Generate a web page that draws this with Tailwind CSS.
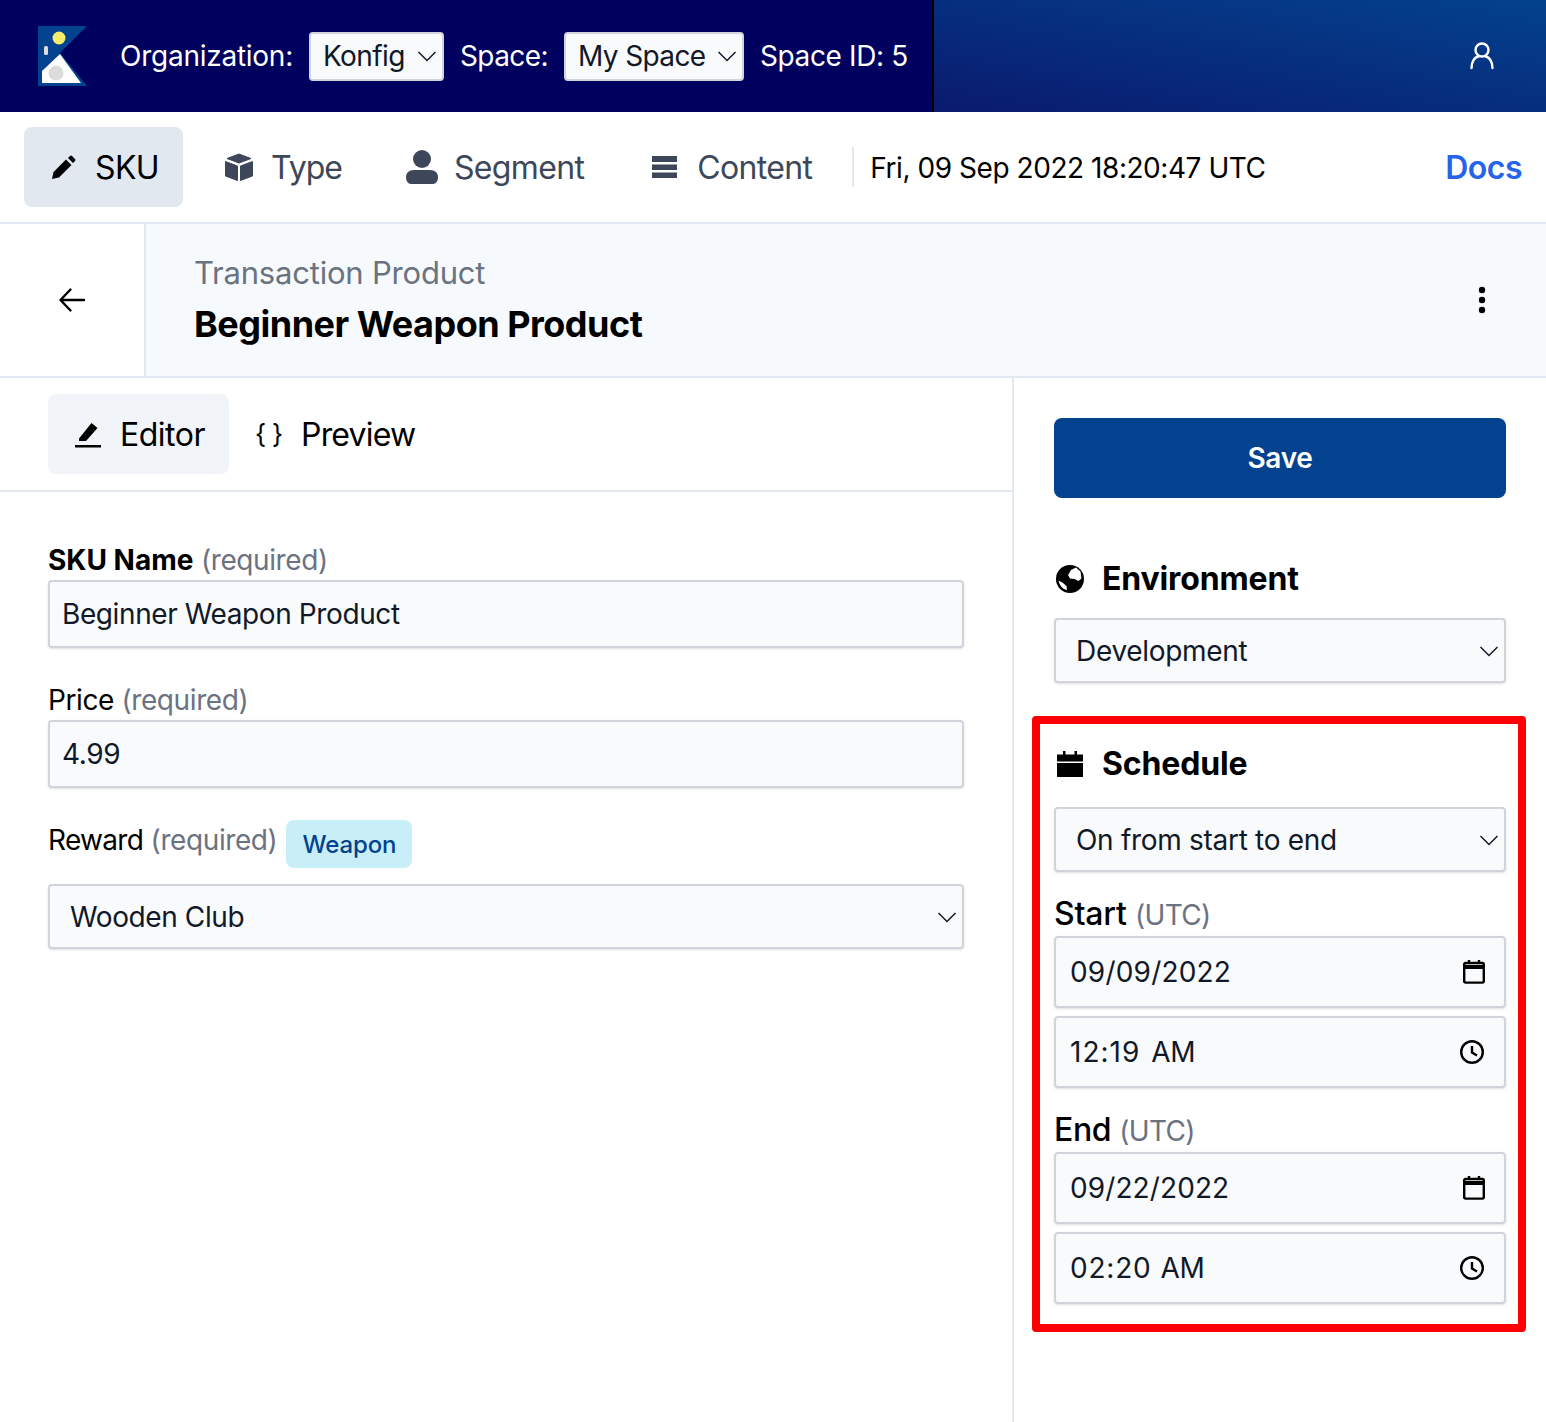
<!DOCTYPE html>
<html lang="en">
  <head>
    <meta charset="UTF-8" />
    <meta name="viewport" content="width=device-width, initial-scale=1.0" />
    <script src="https://cdn.jsdelivr.net/npm/@tailwindcss/browser@4"></script>
    <title>Konfig SKU Editor</title>
  </head>
  <body class="bg-white font-[Inter,sans-serif] text-black">
    <div class="w-[1546px] h-[1422px] overflow-hidden flex flex-col">
      <!-- top bar -->
      <header class="h-[112px] flex shrink-0">
        <div class="w-[934px] bg-[#00005f] border-r-2 border-black flex items-center text-white text-[28px] tracking-[-0.25px]">
          <svg class="ml-[38px] w-[50px] h-[60px] shrink-0" viewBox="0 0 50 60">
            <path d="M0 0H49L22 27L49 60H0Z" fill="#03428e" />
            <path d="M22 28L43 57H4V45Z" fill="#fff" />
            <circle cx="18" cy="47" r="7.5" fill="#dcdcdc" />
            <circle cx="21" cy="12" r="6.5" fill="#f6ec6b" />
            <rect x="6" y="20" width="4" height="9" rx="1.5" fill="#dcdcdc" />
          </svg>
          <span class="ml-[32px]">Organization:</span>
          <div class="ml-[16px] w-[135px] h-[49px] bg-[#f8fafc] border-2 border-[#d1d5db] rounded-[4px] flex items-center justify-between pl-[12px] pr-[5px] text-[#111827] tracking-[-0.6px]">
            <span>Konfig</span>
            <svg class="w-[20px] h-[20px]" viewBox="0 0 20 20" fill="none" stroke="#111827" stroke-width="1.5"><path d="M1.500 6l8.500 8.500L18.500 6" /></svg>
          </div>
          <span class="ml-[16px] tracking-[-0.6px]">Space:</span>
          <div class="ml-[16px] w-[180px] h-[49px] bg-[#f8fafc] border-2 border-[#d1d5db] rounded-[4px] flex items-center justify-between pl-[12px] pr-[5px] text-[#111827] tracking-[-0.6px]">
            <span>My Space</span>
            <svg class="w-[20px] h-[20px]" viewBox="0 0 20 20" fill="none" stroke="#111827" stroke-width="1.5"><path d="M1.500 6l8.500 8.500L18.500 6" /></svg>
          </div>
          <span class="ml-[16px] tracking-[-0.35px]">Space ID: 5</span>
        </div>
        <div class="flex-1 bg-[linear-gradient(190deg,#03428e,#0a1a6e)] flex items-center justify-end pr-[48px]">
          <svg class="w-[32px] h-[32px]" viewBox="0 0 32 32" fill="none" stroke="#fff" stroke-width="2.4" stroke-linecap="round">
            <circle cx="16" cy="10" r="6.5" />
            <path d="M5.5 28c0-6 3-11 7-11.5M26.5 28c0-6-3-11-7-11.5" />
          </svg>
        </div>
      </header>

      <!-- nav -->
      <nav class="h-[112px] shrink-0 border-b-2 border-[#e2e8f0] flex items-center px-[24px] text-[32px] tracking-[-0.65px] text-[#3d4759]">
        <div class="w-[159px] h-[80px] bg-[#e2e8f0] rounded-[8px] flex items-center pl-[28px] text-black">
          <svg class="w-[24px] h-[24px]" viewBox="0 0 24 24" fill="#000"><path d="M0 24l1.500-7L14 4.500 19.500 10 7 22.500zM16 3l2-2q1-1 2 0l3 3q1 1 0 2l-2 2z" /></svg>
          <span class="ml-[19px] pt-[2px]">SKU</span>
        </div>
        <svg class="ml-[41px] w-[30px] h-[30px]" viewBox="0 0 30 30" fill="#3d4759" stroke="#3d4759" stroke-width="1" stroke-linejoin="round"><path d="M15 2L27 6.500L15 11L3 6.500Z" /><path d="M1.500 9.500L13.500 14V28.500L1.500 24Z" /><path d="M28.500 9.500V24L16.500 28.500V14Z" /></svg>
        <span class="ml-[17px] pt-[2px] tracking-[-1px]">Type</span>
        <svg class="ml-[64px] w-[32px] h-[34px]" viewBox="0 0 32 34" fill="#3d4759"><circle cx="16" cy="9" r="9" /><path d="M0 27c0-4 3-7 8-7h16c5 0 8 3 8 7 0 4-2 7-5 7H5c-3 0-5-3-5-7z" /></svg>
        <span class="ml-[16px] pt-[2px]">Segment</span>
        <svg class="ml-[68px] w-[25px] h-[22px]" viewBox="0 0 25 22" fill="#3d4759"><rect y="0" width="25" height="6" /><rect y="8.500" width="25" height="5.500" /><rect y="16.500" width="25" height="5.500" /></svg>
        <span class="ml-[20px] pt-[2px]">Content</span>
        <div class="ml-[40px] w-[2px] h-[40px] bg-[#e2e8f0]"></div>
        <span class="ml-[16px] pt-[2px] text-[28px] tracking-[-0.45px] text-black">Fri, 09 Sep 2022 18:20:47 UTC</span>
        <span class="ml-auto pt-[2px] font-semibold tracking-[-0.5px] text-[#2563eb]">Docs</span>
      </nav>

      <!-- title -->
      <div class="h-[154px] shrink-0 flex border-b-2 border-[#e2e8f0]">
        <div class="w-[146px] border-r-2 border-[#e2e8f0] flex items-center pl-[58px]">
          <svg class="w-[28px] h-[28px]" viewBox="0 0 28 28" fill="none" stroke="#000" stroke-width="2.400" stroke-linecap="round" stroke-linejoin="round"><path d="M12.500 3.500L2.500 14l10 10.500M3 14h23" /></svg>
        </div>
        <div class="flex-1 bg-[#f7fafc] flex items-center pl-[48px] pr-[60px]">
          <div class="pt-[3px]">
            <div class="text-[31px] leading-[44px] tracking-[-0.2px] text-[#6b7280]">Transaction Product</div>
            <div class="text-[36px] leading-[58px] tracking-[-0.5px] font-bold">Beginner Weapon Product</div>
          </div>
          <svg class="ml-auto w-[8px] h-[28px]" viewBox="0 0 8 28" fill="#000"><circle cx="4" cy="4" r="3.200" /><circle cx="4" cy="14" r="3.200" /><circle cx="4" cy="24" r="3.200" /></svg>
        </div>
      </div>

      <div class="flex-1 flex">
        <!-- editor -->
        <main class="w-[1014px] border-r-2 border-[#e2e8f0]">
          <div class="h-[114px] border-b-2 border-[#e2e8f0] flex items-start pt-[16px] pl-[48px] text-[32px] tracking-[-0.5px]">
            <div class="w-[181px] h-[80px] bg-[#f1f5f9] rounded-[8px] flex items-center pl-[26px]">
              <svg class="w-[28px] h-[28px]" viewBox="0 0 28 28" fill="#000"><path d="M5 18.500L17.500 3l6 5L12 21H5zM1 25h26v2.400H1z" /></svg>
              <span class="ml-[18px] pt-[2px]">Editor</span>
            </div>
            <div class="h-[80px] flex items-center ml-[26px]">
              <span class="w-[28px] text-[26px] leading-none tracking-[6px]">{}</span>
              <span class="ml-[18px] pt-[2px] tracking-[-0.8px]">Preview</span>
            </div>
          </div>
          <form class="pl-[48px] pr-[48px] pt-[48px] text-[28px] tracking-[-0.4px]">
            <div class="h-[40px] leading-[40px]"><span class="font-bold tracking-normal">SKU Name</span> <span class="text-[#6b7280]">(required)</span></div>
            <div class="h-[68px] bg-[#f8fafc] border-2 border-[#d1d5db] rounded-[4px] flex items-center pl-[12px] text-[#111827] shadow-sm">Beginner Weapon Product</div>
            <div class="mt-[32px] h-[40px] leading-[40px]">Price <span class="text-[#6b7280]">(required)</span></div>
            <div class="h-[68px] bg-[#f8fafc] border-2 border-[#d1d5db] rounded-[4px] flex items-center pl-[12px] text-[#111827] shadow-sm">4.99</div>
            <div class="mt-[32px] h-[48px] flex items-start">
              <span class="leading-[40px]"><span class="tracking-[-0.7px]">Reward</span> <span class="text-[#6b7280]">(required)</span></span>
              <span class="ml-[9px] h-[48px] pt-[2px] px-[16px] rounded-[8px] bg-[#c8eff8] text-[#03428e] text-[24px] tracking-[-0.1px] font-medium flex items-center">Weapon</span>
            </div>
            <div class="mt-[16px] h-[65px] bg-[#f8fafc] border-2 border-[#d1d5db] rounded-[4px] flex items-center justify-between pl-[20px] pr-[5px] text-[#111827] shadow-sm">
              <span>Wooden Club</span>
              <svg class="w-[20px] h-[20px]" viewBox="0 0 20 20" fill="none" stroke="#111827" stroke-width="1.5"><path d="M1.500 6l8.500 8.500L18.500 6" /></svg>
            </div>
          </form>
        </main>

        <!-- side panel -->
        <aside class="flex-1 pl-[40px] pr-[40px] pt-[40px] text-[28px] tracking-[-0.3px] text-[#111827]">
          <button type="button" class="w-full h-[80px] bg-[#03428e] rounded-[8px] text-white font-semibold">Save</button>
          <div class="mt-[60px] h-[40px] pt-[2px] flex items-center text-[32px] tracking-[-0.15px] font-bold text-black">
            <svg class="ml-[2px] w-[28px] h-[28px]" viewBox="0 0 28 28"><circle cx="14" cy="14" r="14" fill="#000" /><path d="M15 5l5-2.500 4.500 4 1 7-3 2.500-4-2-4.500-.5-2-3.500zM2.500 15.500l4.500 2.500 3.500 3 .5 4C6 24 3.500 20 2.500 15.500z" fill="#fff" /></svg>
            <span class="ml-[18px]">Environment</span>
          </div>
          <div class="mt-[20px] h-[65px] bg-[#f8fafc] border-2 border-[#d1d5db] rounded-[4px] flex items-center justify-between pl-[20px] pr-[5px] shadow-sm">
            <span>Development</span>
            <svg class="w-[20px] h-[20px]" viewBox="0 0 20 20" fill="none" stroke="#111827" stroke-width="1.5"><path d="M1.500 6l8.500 8.500L18.500 6" /></svg>
          </div>

          <!-- highlighted schedule section -->
          <section class="mt-[33px] ml-[-22px] mr-[-20px] h-[616px] border-[8px] border-[#ff0000] rounded-[4px] pl-[14px] pr-[12px]">
            <div class="mt-[20px] h-[40px] flex items-center text-[32px] tracking-[-0.15px] font-bold text-black">
              <svg class="ml-[3px] w-[26px] h-[26px]" viewBox="0 0 26 26" fill="#000"><path d="M6 0h2.500v3.500h9V0H20v3.500h6V10.500H0V3.500h6zM0 12h26v14H0z" /></svg>
              <span class="ml-[19px]">Schedule</span>
            </div>
            <div class="mt-[23px] h-[65px] bg-[#f8fafc] border-2 border-[#d1d5db] rounded-[4px] flex items-center justify-between pl-[20px] pr-[5px] shadow-sm">
              <span>On from start to end</span>
              <svg class="w-[20px] h-[20px]" viewBox="0 0 20 20" fill="none" stroke="#111827" stroke-width="1.5"><path d="M1.500 6l8.500 8.500L18.500 6" /></svg>
            </div>
            <div class="mt-[20px] h-[44px] leading-[44px] text-[32px] tracking-[-0.2px] text-black font-medium">Start <span class="text-[28px] font-normal tracking-[-0.7px] text-[#6b7280]">(UTC)</span></div>
            <div class="h-[72px] bg-[#f8fafc] border-2 border-[#d1d5db] rounded-[4px] flex items-center justify-between pl-[14px] pr-[19px] shadow-sm">
              <span class="tracking-[0.2px]">09/09/2022</span>
              <svg class="w-[22px] h-[24px]" viewBox="0 0 22 24" fill="none" stroke="#000" stroke-width="2.400"><rect x="1.200" y="3" width="19.600" height="19.600" rx="1.500" /><path d="M1 7h20" stroke-width="4" /><path d="M6 0v3M16 0v3" /></svg>
            </div>
            <div class="mt-[8px] h-[72px] bg-[#f8fafc] border-2 border-[#d1d5db] rounded-[4px] flex items-center justify-between pl-[14px] pr-[20px] shadow-sm">
              <span><span class="tracking-[1px]">12:19</span><span class="ml-[11px]">AM</span></span>
              <svg class="w-[24px] h-[24px]" viewBox="0 0 24 24" fill="none" stroke="#000" stroke-width="2.400"><circle cx="12" cy="12" r="10.800" /><path d="M12 6v6.500l5 3" /></svg>
            </div>
            <div class="mt-[20px] h-[44px] leading-[44px] text-[32px] tracking-[-0.4px] text-black font-medium">End <span class="text-[28px] font-normal tracking-[-0.7px] text-[#6b7280]">(UTC)</span></div>
            <div class="h-[72px] bg-[#f8fafc] border-2 border-[#d1d5db] rounded-[4px] flex items-center justify-between pl-[14px] pr-[19px] shadow-sm">
              <span class="tracking-[0.1px]">09/22/2022</span>
              <svg class="w-[22px] h-[24px]" viewBox="0 0 22 24" fill="none" stroke="#000" stroke-width="2.400"><rect x="1.200" y="3" width="19.600" height="19.600" rx="1.500" /><path d="M1 7h20" stroke-width="4" /><path d="M6 0v3M16 0v3" /></svg>
            </div>
            <div class="mt-[8px] h-[72px] bg-[#f8fafc] border-2 border-[#d1d5db] rounded-[4px] flex items-center justify-between pl-[14px] pr-[20px] shadow-sm">
              <span><span class="tracking-[0.8px]">02:20</span><span class="ml-[9px]">AM</span></span>
              <svg class="w-[24px] h-[24px]" viewBox="0 0 24 24" fill="none" stroke="#000" stroke-width="2.400"><circle cx="12" cy="12" r="10.800" /><path d="M12 6v6.500l5 3" /></svg>
            </div>
          </section>
        </aside>
      </div>
    </div>
  </body>
</html>
